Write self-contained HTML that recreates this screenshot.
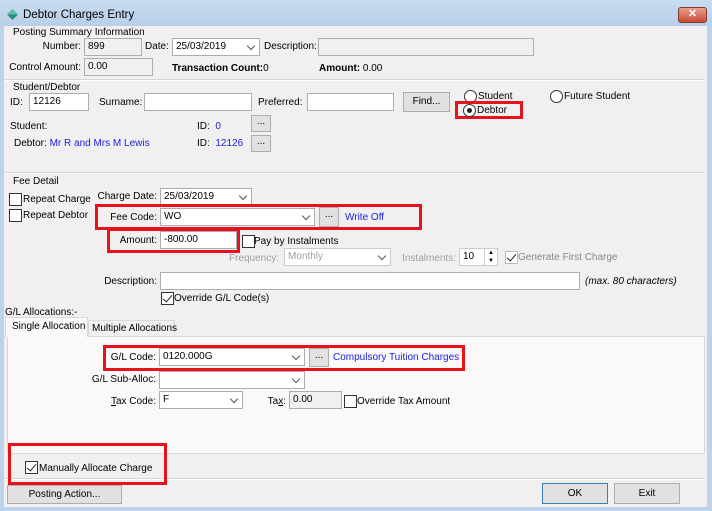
<!DOCTYPE html>
<html><head><meta charset="utf-8"><style>
*{box-sizing:border-box}
body{margin:0;width:712px;height:511px;overflow:hidden;background:#bdd3ea;font-family:"Liberation Sans",sans-serif;font-size:10px;color:#000;position:relative}
.a{position:absolute;white-space:nowrap}
.r{position:absolute;white-space:nowrap;text-align:right}
.title{position:absolute;left:0;top:0;width:712px;height:26px;background:linear-gradient(#c9dcf0,#b7cfe9)}
.client{position:absolute;left:4px;top:26px;width:703px;height:481px;background:#f0f0f0}
.in{position:absolute;background:#fff;border:1px solid #abadb3;height:18px;padding:1px 3px;line-height:14px}
.ro{background:#f0f0f0}
.cb:after{content:"";position:absolute;right:5px;top:4px;width:5px;height:5px;border-right:1px solid #555;border-bottom:1px solid #555;transform:rotate(45deg)}
.btn{position:absolute;background:#e1e1e1;border:1px solid #adadad;text-align:center;line-height:17px}
.chk{position:absolute;width:13px;height:13px;border:1px solid #333;background:#fff}
.chk.on:after{content:"";position:absolute;left:3px;top:0px;width:4px;height:8px;border-right:1.5px solid #222;border-bottom:1.5px solid #222;transform:rotate(40deg)}
.rad{position:absolute;width:13px;height:13px;border:1px solid #333;border-radius:50%;background:#fff}
.rad.on:after{content:"";position:absolute;left:3px;top:3px;width:5px;height:5px;border-radius:50%;background:#222}
.red{position:absolute;border:3px solid #e8121c}
.blue{color:#2020e0}
.gray{color:#a0a0a0}
.line{position:absolute;height:2px;border-top:1px solid #d5d5d5;border-bottom:1px solid #fff}
</style></head><body>
<div class="title"></div>
<svg class="a" style="left:7px;top:9px" width="11" height="11"><path d="M5.5 0L11 5.5 5.5 11 0 5.5z" fill="#2b8a7a"/><path d="M5.5 0L11 5.5H0z" fill="#5fc0b0"/></svg>
<div class="a" style="left:23px;top:9px;font-size:11.5px">Debtor Charges Entry</div>
<div class="a" style="left:678px;top:7px;width:29px;height:16px;background:linear-gradient(#e7a08f,#c74a35);border:1px solid #8a3a2c;border-radius:3px;color:#fff;text-align:center;font-weight:bold;font-size:11px;line-height:13px">✕</div>
<div class="client"></div>

<div class="a" style="left:13px;top:27px">Posting Summary Information</div>
<div class="r" style="right:631px;top:41px">Number:</div>
<div class="in ro" style="left:84px;top:38px;width:58px">899</div>
<div class="a" style="left:145px;top:41px">Date:</div>
<div class="in cb" style="left:172px;top:38px;width:88px">25/03/2019</div>
<div class="a" style="left:264px;top:41px">Description:</div>
<div class="in ro" style="left:318px;top:38px;width:216px"></div>
<div class="r" style="right:631px;top:62px">Control Amount:</div>
<div class="in ro" style="left:84px;top:58px;width:69px">0.00</div>
<div class="a" style="left:172px;top:63px"><b>Transaction Count:</b>0</div>
<div class="a" style="left:319px;top:63px"><b>Amount:</b> 0.00</div>
<div class="line" style="left:5px;top:79px;width:700px"></div>

<div class="a" style="left:13px;top:82px">Student/Debtor</div>
<div class="a" style="left:10px;top:97px">ID:</div>
<div class="in" style="left:29px;top:93px;width:60px">12126</div>
<div class="a" style="left:99px;top:97px">Surname:</div>
<div class="in" style="left:144px;top:93px;width:108px"></div>
<div class="a" style="left:258px;top:97px">Preferred:</div>
<div class="in" style="left:307px;top:93px;width:87px"></div>
<div class="btn" style="left:403px;top:92px;width:47px;height:20px">Find...</div>
<div class="rad" style="left:464px;top:90px"></div>
<div class="a" style="left:478px;top:91px">Student</div>
<div class="rad" style="left:550px;top:90px"></div>
<div class="a" style="left:564px;top:91px">Future Student</div>
<div class="red" style="left:455px;top:101px;width:68px;height:18px"></div>
<div class="rad on" style="left:463px;top:104px"></div>
<div class="a" style="left:477px;top:105px">Debtor</div>
<div class="a" style="left:10px;top:121px">Student:</div>
<div class="a" style="left:197px;top:121px">ID: <span class="blue">&nbsp;0</span></div>
<div class="btn" style="left:251px;top:115px;width:20px;height:17px;line-height:11px">...</div>
<div class="a" style="left:14px;top:138px">Debtor: <span class="blue">Mr R and Mrs M Lewis</span></div>
<div class="a" style="left:197px;top:138px">ID: <span class="blue">&nbsp;12126</span></div>
<div class="btn" style="left:251px;top:135px;width:20px;height:17px;line-height:11px">...</div>
<div class="line" style="left:5px;top:172px;width:700px"></div>

<div class="a" style="left:13px;top:176px">Fee Detail</div>
<div class="chk" style="left:9px;top:193px"></div>
<div class="a" style="left:23px;top:194px">Repeat Charge</div>
<div class="chk" style="left:9px;top:209px"></div>
<div class="a" style="left:23px;top:210px">Repeat Debtor</div>
<div class="r" style="right:555px;top:191px">Charge Date:</div>
<div class="in cb" style="left:160px;top:188px;width:92px">25/03/2019</div>
<div class="red" style="left:95px;top:204px;width:327px;height:26px"></div>
<div class="r" style="right:555px;top:212px">Fee Code:</div>
<div class="in cb" style="left:160px;top:208px;width:155px">WO</div>
<div class="btn" style="left:319px;top:207px;width:20px;height:20px;line-height:14px">...</div>
<div class="a blue" style="left:345px;top:212px">Write Off</div>
<div class="red" style="left:107px;top:228px;width:133px;height:25px"></div>
<div class="r" style="right:555px;top:235px">Amount:</div>
<div class="in" style="left:160px;top:231px;width:77px">-800.00</div>
<div class="chk" style="left:242px;top:235px"></div>
<div class="a" style="left:254px;top:236px">Pay by Instalments</div>
<div class="r gray" style="right:433px;top:253px">Frequency:</div>
<div class="in cb gray" style="left:284px;top:248px;width:107px;border-color:#ccc">Monthly</div>
<div class="r gray" style="right:256px;top:253px">Instalments:</div>
<div class="in" style="left:459px;top:248px;width:39px;border-color:#ccc">10</div>
<div class="a" style="left:484px;top:249px;width:13px;height:16px;border-left:1px solid #ccc;font-size:6px;line-height:8px;text-align:center">▲<br>▼</div>
<div class="chk on" style="left:505px;top:251px;border-color:#bbb"></div>
<div class="a gray" style="left:518px;top:252px;color:#888">Generate First Charge</div>
<div class="r" style="right:555px;top:276px">Description:</div>
<div class="in" style="left:160px;top:272px;width:420px"></div>
<div class="a" style="left:585px;top:276px;font-style:italic">(max. 80 characters)</div>
<div class="chk on" style="left:161px;top:292px"></div>
<div class="a" style="left:174px;top:293px">Override G/L Code(s)</div>

<div class="a" style="left:5px;top:307px">G/L Allocations:-</div>
<div class="a" style="left:88px;top:320px;width:87px;height:17px;border:1px solid #d9d9d9;background:#f0f0f0;padding:2px 3px">Multiple Allocations</div>
<div class="a" style="left:7px;top:336px;width:698px;height:118px;border:1px solid #d9d9d9;background:#f9f9f9"></div>
<div class="a" style="left:5px;top:317px;width:83px;height:20px;border:1px solid #d9d9d9;border-bottom:none;background:#f9f9f9;padding:3px 6px">Single Allocation</div>
<div class="red" style="left:103px;top:345px;width:362px;height:26px"></div>
<div class="r" style="right:556px;top:352px">G/L Code:</div>
<div class="in cb" style="left:159px;top:348px;width:146px">0120.000G</div>
<div class="btn" style="left:309px;top:348px;width:20px;height:19px;line-height:13px">...</div>
<div class="a blue" style="left:333px;top:352px">Compulsory Tuition Charges</div>
<div class="r" style="right:556px;top:374px">G/L Sub-Alloc:</div>
<div class="in cb" style="left:159px;top:371px;width:146px"></div>
<div class="r" style="right:556px;top:396px"><u>T</u>ax Code:</div>
<div class="in cb" style="left:159px;top:391px;width:84px">F</div>
<div class="r" style="right:426px;top:396px">Ta<u>x</u>:</div>
<div class="in ro" style="left:289px;top:391px;width:53px">0.00</div>
<div class="chk" style="left:344px;top:395px"></div>
<div class="a" style="left:357px;top:396px">Override Tax Amount</div>
<div class="line" style="left:5px;top:478px;width:700px"></div>
<div class="red" style="left:8px;top:443px;width:159px;height:42px"></div>
<div class="chk on" style="left:25px;top:461px"></div>
<div class="a" style="left:39px;top:463px">Manually Allocate Charge</div>
<div class="btn" style="left:7px;top:485px;width:115px;height:19px">Posting Action...</div>
<div class="btn" style="left:542px;top:483px;width:66px;height:21px;border-color:#3c7fb1;line-height:19px">OK</div>
<div class="btn" style="left:614px;top:483px;width:66px;height:21px;line-height:19px">Exit</div>
</body></html>
